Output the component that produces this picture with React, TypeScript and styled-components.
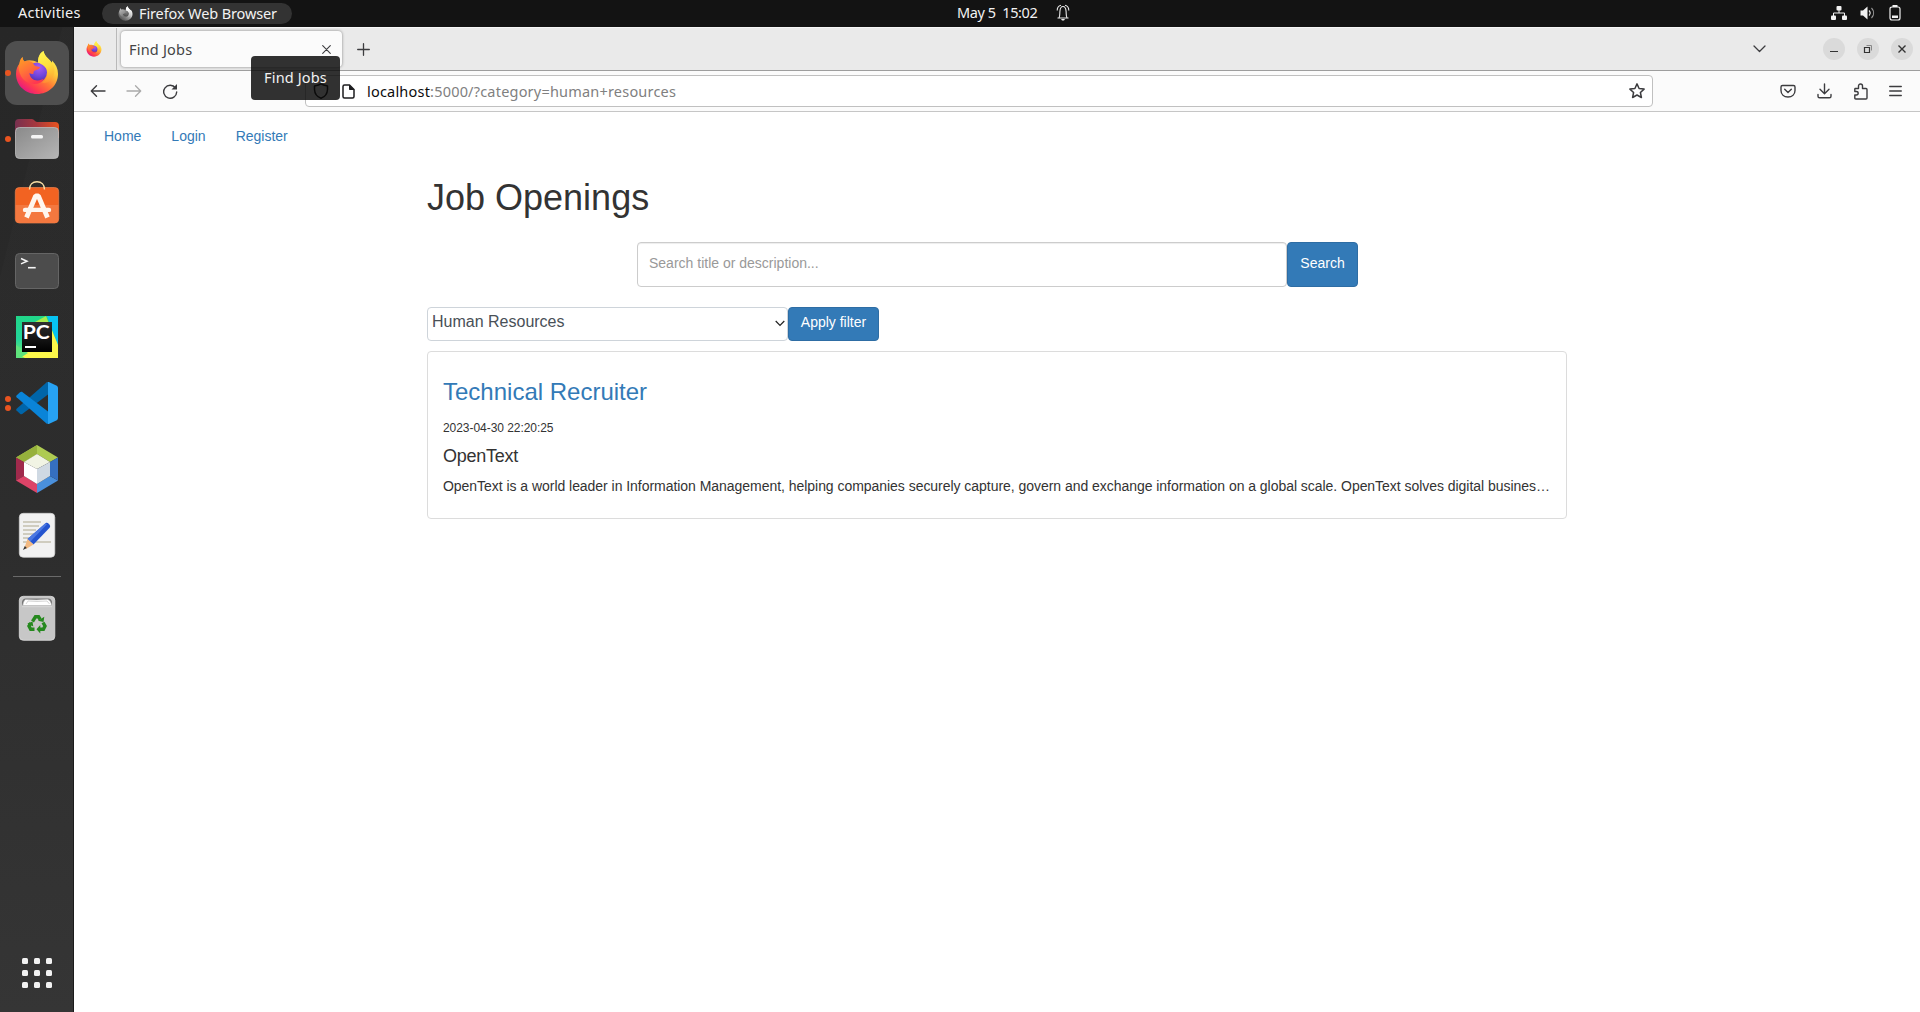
import React from 'react';
import styled, { createGlobalStyle } from 'styled-components';

const ui = '"Noto Sans", "Open Sans", sans-serif';
const helvetica = '"Helvetica Neue", "Liberation Sans", Arial, sans-serif';

const GlobalStyle = createGlobalStyle`
  *, *::before, *::after { box-sizing: border-box; }
  html, body { margin: 0; background: #fff; }
  body { width: 1920px; height: 1012px; overflow: hidden; font-family: ${helvetica}; }
  svg { display: block; flex: none; }
`;

const Desktop = styled.div`
  display: grid;
  grid-template-rows: 27px 985px;
  width: 1920px;
  height: 1012px;
`;

const TopBar = styled.header`
  display: grid;
  grid-template-columns: 937px 1fr auto;
  background: #131313;
  color: #f2f2f2;
  font: 14.5px/25px ${ui};
`;

const TopLeft = styled.div`
  display: flex;
  align-items: center;
  padding-left: 18px;
`;

const Activities = styled.span`
  width: 84px;
  padding-bottom: 2px;
  letter-spacing: 0.22px;
  white-space: nowrap;
`;

const AppPill = styled.div`
  display: flex;
  align-items: center;
  gap: 6px;
  width: 190px;
  height: 21px;
  padding-left: 16px;
  border-radius: 11px;
  background: #333;
  line-height: 21px;
  letter-spacing: -0.12px;
  white-space: nowrap;
`;

const Clock = styled.div`
  display: flex;
  align-items: center;
  gap: 19px;
  padding: 0 0 2px 20px;
  letter-spacing: -0.42px;
  white-space: pre;
`;

const Tray = styled.div`
  display: flex;
  align-items: center;
  gap: 13px;
  padding: 0 19px 1px 0;
`;

const Workspace = styled.div`
  display: grid;
  grid-template-columns: 74px 1846px;
`;

const Dock = styled.nav`
  display: flex;
  flex-direction: column;
  padding-top: 13px;
  border-right: 1px solid #1b1b1b;
  background: linear-gradient(104deg, transparent 0 60px, rgba(255, 255, 255, 0.012) 61px),
    linear-gradient(180deg, #272727, #2b2b2b 50%, #333 100%);
`;

const DockItem = styled.div`
  display: grid;
  grid-template-columns: 5px 64px;
  align-items: center;
  height: 66px;
  position: relative;
`;

const DockTile = styled.div<{ $active?: boolean }>`
  grid-column: 2;
  width: 64px;
  height: 64px;
  border-radius: 12px;
  background: ${(p) => (p.$active ? '#4f4f4f' : 'transparent')};
`;

const RunDots = styled.div`
  position: absolute;
  left: 5px;
  top: 0;
  bottom: 0;
  display: flex;
  flex-direction: column;
  justify-content: center;
  gap: 3px;
`;

const RunDot = styled.i`
  width: 6px;
  height: 6px;
  border-radius: 50%;
  background: #e95420;
`;

const DockRule = styled.div`
  height: 1px;
  margin: 8px 12px 8px 13px;
  background: #6a6a6a;
`;

const AppsButton = styled.div`
  display: grid;
  grid-template-columns: repeat(3, 6px);
  grid-auto-rows: 6px;
  gap: 6px;
  margin: auto 0 24px 22px;
`;

const AppDot = styled.i`
  border-radius: 1.5px;
  background: #f2f2f2;
`;

const Browser = styled.div`
  display: grid;
  grid-template-rows: 44px 41px 900px;
  background: #fff;
`;

const TabStrip = styled.div`
  display: flex;
  align-items: center;
  border-top: 1px solid #f7f7f7;
  border-bottom: 1px solid #9e9e9e;
  background: #eaeaea;
`;

const PinnedTab = styled.div`
  display: flex;
  align-items: center;
  align-self: stretch;
  width: 43px;
  padding-left: 12px;
  border-right: 1px solid #b9b9b9;
`;

const ActiveTab = styled.div`
  display: flex;
  align-items: center;
  justify-content: space-between;
  width: 221px;
  height: 36px;
  margin: 0 15px 0 4px;
  padding: 0 11px 0 8px;
  border-radius: 4px;
  background: #fbfbfb;
  box-shadow: 0 0 3px rgba(0, 0, 0, 0.45);
  color: #444;
  font: 14.5px/36px ${ui};
  letter-spacing: 0.2px;
`;

const WindowControls = styled.div`
  display: flex;
  align-items: center;
  gap: 12px;
  margin-left: auto;
  padding-right: 7px;
`;

const TabListSlot = styled.div`
  margin-right: 45px;
`;

const WindowButton = styled.button`
  display: grid;
  place-items: center;
  width: 22px;
  height: 22px;
  padding: 0;
  border: 0;
  border-radius: 50%;
  background: #dadada;
`;

const Toolbar = styled.div`
  display: flex;
  align-items: center;
  border-bottom: 1px solid #c6c6c6;
  background: #fbfbfb;
`;

const HistoryButtons = styled.div`
  display: flex;
  align-items: center;
  gap: 20px;
  width: 231px;
  padding-left: 16px;
`;

const UrlBar = styled.div`
  display: flex;
  align-items: center;
  width: 1348px;
  height: 32px;
  padding: 0 7px 0 7px;
  border: 1px solid #c0c0c0;
  border-radius: 4px;
  background: #fff;
`;

const PageGlyph = styled.div`
  margin: 0 12px 0 13px;
`;

const UrlText = styled.div`
  flex: 1;
  color: #808080;
  font: 14.5px/30px ${ui};
  letter-spacing: 0.2px;
`;

const UrlHost = styled.span`
  color: #0c0c0d;
`;

const ToolbarActions = styled.div`
  display: flex;
  align-items: center;
  justify-content: space-between;
  width: 122px;
  margin-left: 127px;
`;

const Tooltip = styled.div`
  position: absolute;
  z-index: 5;
  left: 251px;
  top: 56px;
  width: 89px;
  height: 44px;
  border-radius: 4px;
  background: rgba(10, 10, 10, 0.84);
  color: #f2f2f2;
  text-align: center;
  font: 14.5px/43px ${ui};
  letter-spacing: 0.15px;
`;

const Page = styled.div`
  color: #333;
  font-size: 14px;
`;

const SiteNav = styled.nav`
  display: flex;
  gap: 30px;
  height: 48px;
  padding-left: 30px;
  line-height: 48px;
`;

const Link = styled.a`
  color: #337ab7;
  text-decoration: none;
`;

const Container = styled.main`
  display: flex;
  flex-direction: column;
  width: 1140px;
  margin-left: 353px;
`;

const PageTitle = styled.h1`
  margin: 18px 0 24px;
  font-size: 36px;
  font-weight: 400;
  line-height: 40px;
`;

const SearchRow = styled.form`
  display: flex;
  height: 45px;
  margin: 0 0 20px 210px;
`;

const SearchInput = styled.input`
  width: 650px;
  padding: 0 12px 4px 11px;
  border: 1px solid #ccc;
  border-radius: 4px;
  box-shadow: inset 0 1px 1px rgba(0, 0, 0, 0.075);
  font: 14px/20px ${helvetica};
  &::placeholder { color: #999; opacity: 1; }
`;

const Button = styled.button<{ $width: number }>`
  width: ${(p) => p.$width}px;
  padding: 0 0 4px;
  border: 1px solid #2e6da4;
  border-radius: 4px;
  background: #337ab7;
  color: #fff;
  font: 14px/20px ${helvetica};
`;

const FilterRow = styled.div`
  display: flex;
  height: 34px;
  margin-bottom: 10px;
`;

const Select = styled.div`
  display: flex;
  align-items: center;
  justify-content: space-between;
  width: 361px;
  padding: 0 2px 4px 4px;
  border: 1px solid #ced4da;
  border-radius: 4px;
  color: #495057;
  font-size: 16px;
`;

const SelectArrow = styled.svg`
  margin-top: 3px;
`;

const JobCard = styled.article`
  height: 168px;
  padding: 27px 15px 0;
  border: 1px solid #dcdcdc;
  border-radius: 4px;
`;

const JobTitle = styled.h3`
  margin: 0 0 13px;
  font-size: 24px;
  font-weight: 400;
  line-height: 26px;
`;

const JobDate = styled.p`
  margin: 0 0 8px;
  font-size: 12px;
  line-height: 20px;
  letter-spacing: -0.05px;
`;

const Company = styled.h4`
  margin: 0 0 10px;
  font-size: 18px;
  font-weight: 400;
  line-height: 20px;
  letter-spacing: -0.25px;
`;

const Description = styled.p`
  margin: 0;
  line-height: 20px;
  letter-spacing: -0.039px;
  white-space: nowrap;
`;

function FirefoxIcon({ size = 64, crop = '0 0 64 64', mono = false, id = 'ff' }) {
  return (
    <svg width={size} height={size} viewBox={crop} style={mono ? { filter: 'grayscale(1) brightness(1.1)' } : undefined}>
      <defs>
        <linearGradient id={`${id}a`} x1="0.85" y1="0.1" x2="0.2" y2="0.95">
          <stop offset="0" stopColor="#fff44f" />
          <stop offset="0.3" stopColor="#ffc63a" />
          <stop offset="0.55" stopColor="#ff7a35" />
          <stop offset="0.8" stopColor="#ff3b50" />
          <stop offset="1" stopColor="#e31587" />
        </linearGradient>
        <radialGradient id={`${id}b`} cx="0.6" cy="0.25" r="0.8">
          <stop offset="0" stopColor="#a95bf5" />
          <stop offset="0.6" stopColor="#6b43d8" />
          <stop offset="1" stopColor="#4a2a9c" />
        </radialGradient>
        <linearGradient id={`${id}c`} x1="0" y1="0" x2="0.6" y2="1">
          <stop offset="0" stopColor="#ffa320" />
          <stop offset="0.5" stopColor="#ff7139" />
          <stop offset="1" stopColor="#ff3750" />
        </linearGradient>
        <linearGradient id={`${id}d`} x1="0.4" y1="0" x2="0.7" y2="1">
          <stop offset="0" stopColor="#fff44f" />
          <stop offset="0.5" stopColor="#ffdd3d" />
          <stop offset="1" stopColor="#ff9b2e" stopOpacity="0.3" />
        </linearGradient>
      </defs>
      <path fill={`url(#${id}a)`} d="M17.5 16c.2 2 .9 3.700 2 4.500C23 18.500 28 19 33 21.500c.2-5.500 1.500-9 5.500-11.500.6 4 3.500 6.500 6.500 9.500l1.600 2.600c.4-.8.5-1.700.4-2.600C51 23 53 28 53 33c0 11.500-9.500 20-21 20S11 44.500 11 33c0-5 1.700-8 3.500-10.500.2-2.500 1.300-4.800 3-6.500z" />
      <circle cx="32" cy="31.500" r="10" fill={`url(#${id}b)`} />
      <path fill={`url(#${id}d)`} d="M38.500 10c.6 4 3.500 6.500 6.500 9.500 5 5.500 6 12 2 18-3 4.500-7 5-10 4 4-2.500 6-6 5.500-10.500-.5-5-5-7.500-9.500-9.500.2-5.500 1.500-9 5.500-11.500z" />
      <path fill={`url(#${id}c)`} d="M17.500 16c.2 2 .9 3.700 2 4.500 3-1 5.800-.5 8.500 1.500 1 3 3.500 3.500 7 4-.5 2.300-3 2.600-5.500 3.700-1.500.8-.5 2-1.300 3.400-1.500 0-2.700-.5-3.700-1.200 0 4 3.500 7.500 8 7.500 3 0 4.500-1 6.500-1.700-2 4-6 5.700-10 5.300C20 42.500 14 36 13.500 25c.3-.8.600-1.700 1-2.500.2-2.500 1.300-4.800 3-6.500z" />
    </svg>
  );
}

const FilesIcon = () => (
  <svg width="64" height="64" viewBox="0 0 64 64">
    <defs>
      <linearGradient id="flBack" x1="0" y1="0" x2="1" y2="0"><stop stopColor="#77304f" /><stop offset="0.5" stopColor="#a9383d" /><stop offset="1" stopColor="#e9541f" /></linearGradient>
      <linearGradient id="flFront" x1="0" y1="0" x2="1" y2="1"><stop stopColor="#8a8a8a" /><stop offset="1" stopColor="#b5b5b5" /></linearGradient>
    </defs>
    <path fill="url(#flBack)" d="M10 16a4 4 0 0 1 4-4h13c2 0 3 3 5 3h18a4 4 0 0 1 4 4v12H10z" />
    <rect x="10.500" y="20.500" width="43" height="31" rx="4" fill="url(#flFront)" stroke="#bcbcbc" strokeWidth=".8" />
    <rect x="26" y="28" width="12" height="3.500" rx="1.500" fill="#f4f4f4" />
  </svg>
);

const SoftwareIcon = () => (
  <svg width="64" height="64" viewBox="0 0 64 64">
    <rect x="10.300" y="14.500" width="43.400" height="35.500" rx="4" fill="#f26322" stroke="#e9814f" strokeWidth=".7" />
    <path fill="#f4783f" d="M10.600 32h42.800v14a4 4 0 0 1-4 4H14.600a4 4 0 0 1-4-4z" />
    <path d="M24.500 16.500c0-5 3.200-7.700 7.500-7.700s7.500 2.700 7.500 7.700" fill="none" stroke="#fbe0a6" strokeWidth="1.400" />
    <g stroke="#fff6ef" fill="none">
      <path strokeWidth="4.800" strokeLinejoin="bevel" d="M21.500 44.500L30.600 23h2.800l9.100 21.500" />
      <path strokeWidth="4.400" strokeLinecap="round" d="M20 36.900h24" />
    </g>
  </svg>
);

const TerminalIcon = () => (
  <svg width="64" height="64" viewBox="0 0 64 64">
    <rect x="10.500" y="14.500" width="43" height="35" rx="4" fill="#4c4c4c" stroke="#656565" />
    <path d="M16 19.500l6 2.700-6 2.700" fill="none" stroke="#f5f5f5" strokeWidth="1.500" />
    <path d="M23 28.700h7.700" stroke="#f5f5f5" strokeWidth="1.600" />
  </svg>
);

const PyLetters = styled.text`
  font: 700 18.5px Lato, sans-serif;
  fill: #fff;
`;

const PyCharmIcon = () => (
  <svg width="64" height="64" viewBox="0 0 64 64">
    <defs>
      <linearGradient id="pyGreen" x1="0" y1="0" x2="0" y2="1"><stop stopColor="#21d789" /><stop offset=".55" stopColor="#23d49a" /><stop offset="1" stopColor="#7aea6b" /></linearGradient>
      <linearGradient id="pyBox" x1="0" y1="0" x2="0" y2="1"><stop stopColor="#2f2f2f" /><stop offset="1" stopColor="#000" /></linearGradient>
    </defs>
    <path fill="url(#pyGreen)" d="M11 11h42v42H11z" />
    <path fill="#07c3f2" d="M42 11h11v29z" />
    <path fill="#a8ec4e" d="M30 17l11-6 4 10-12 12z" />
    <path fill="#fcf84a" d="M44 18l9 22v13H20l-5-3 26-24z" />
    <path fill="#5fe37c" d="M11 40l12 8-8 5h-4z" />
    <path fill="url(#pyBox)" d="M17 17h30v30H17z" />
    <PyLetters x="17.800" y="34" textLength="27" lengthAdjust="spacingAndGlyphs">PC</PyLetters>
    <path fill="#fff" d="M20 41h11v2H20z" />
  </svg>
);

const CodeIcon = () => (
  <svg width="64" height="64" viewBox="0 0 64 64">
    <path fill="#0065a9" d="M11.500 39.500L15 42.700c.8.700 1.800.7 2.600.1L43 23.500V13c0-1.500-.7-2-1.500-1.500L11.600 37.800c-.5.500-.5 1.200-.1 1.700z" />
    <path fill="#0a84d8" d="M11.500 24.500L15 21.300c.8-.7 1.800-.7 2.600-.1L43 40.500V51c0 1.500-.7 2-1.500 1.500L11.600 26.200c-.5-.5-.5-1.200-.1-1.700z" />
    <path fill="#27a2f3" d="M44.300 11.200l7.500 3.600A2.500 2.500 0 0 1 53 17v30a2.500 2.500 0 0 1-1.200 2.200l-7.500 3.600c-1 .5-2 .3-2.800-.5.900.9 1.500.3 1.500-1.300V13c0-1.600-.6-2.200-1.500-1.300.8-.8 1.800-1 2.800-.5z" />
  </svg>
);

const NetBeansIcon = () => (
  <svg width="64" height="64" viewBox="0 0 64 64">
    <path fill="#aecb52" d="M32 8l21 12.500-8 4.500-13-8-13 8-8-4.500z" />
    <path fill="#96b13c" d="M32 8v9l-13 8-8-4.500z" />
    <path fill="#a02a4c" d="M11 20.500l8 4.500v14l-8 4.500z" />
    <path fill="#dd4468" d="M11 43.500l8-4.500 13 8v9z" />
    <path fill="#4a90dc" d="M32 56v-9l13-8 8 4.500z" />
    <path fill="#356fc0" d="M53 20.500V43.500L45 39V25z" />
    <path fill="#f1f4e4" d="M32 17l13 8-13 7-13-7z" />
    <path fill="#fff" d="M19 25l13 7v15l-13-8z" />
    <path fill="#cfd9e3" d="M45 25l-13 7v15l13-8z" />
  </svg>
);

const EditorIcon = () => (
  <svg width="64" height="64" viewBox="0 0 64 64">
    <rect x="14.300" y="10.300" width="35.500" height="44" rx="4" fill="#f1f1f1" stroke="#d6d6d6" strokeWidth=".7" />
    <path stroke="#cfccbf" strokeWidth="2" d="M18 19h18M18 23h16M18 27h13M18 31h11M18 35h9M18 39h28" />
    <path fill="#2454cf" d="M40.500 20.300c1-.8 2.200-.5 3.500.8s1.500 2.600.6 3.600L28.500 41.500l-6-5.500z" />
    <path fill="#4b78e2" d="M40.500 20.300l1.500 1L25 39l-2.500-3z" />
    <path fill="#f2b982" d="M22.500 36l6 5.500-7.500 4.500-1.500-1.500z" />
    <path fill="#333" d="M19.800 43l2 2-3.800 2z" />
  </svg>
);

const TrashIcon = () => (
  <svg width="64" height="64" viewBox="0 0 64 64">
    <rect x="14.300" y="10.300" width="35.500" height="44" rx="4" fill="#c7c7c7" stroke="#dedede" strokeWidth=".8" />
    <path fill="#777" d="M17.500 19.500c-1.300-3-.3-7 3-7h23c3.300 0 4.300 4 3 7z" />
    <path fill="#fff" stroke="#b5b5b5" strokeWidth=".5" d="M18 19.500c0-2 .6-4.500 2.500-6l11 .4 11-.6c2.500.7 4 3.700 4 6.200z" />
    <path fill="none" stroke="#bbb" strokeWidth=".6" d="M21 18l2-3 9 .5 10-.5 2.500 3" />
    <path fill="#d4d4d4" d="M17 19.800h30v1.500H17z" />
    <g fill="none" stroke="#26891f" strokeWidth="3.400">
      <path d="M27.500 35.500l3-4.800h3l1.700 2.800" />
      <path d="M38 36.500l2 3.500-1.600 3.200h-4" />
      <path d="M29.500 43.300h-3.800L24 40l1.700-2.800" />
    </g>
    <path fill="#26891f" d="M33 34.700l5.500 1.200.8-5.200zM35.300 39v8.500l-3.800-4.300zM22.300 37.500l5.200-2 .8 5z" />
  </svg>
);

const dockItems = [
  { name: 'firefox', icon: <FirefoxIcon />, dots: 1, active: true },
  { name: 'files', icon: <FilesIcon />, dots: 1 },
  { name: 'software', icon: <SoftwareIcon />, dots: 0 },
  { name: 'terminal', icon: <TerminalIcon />, dots: 0 },
  { name: 'pycharm', icon: <PyCharmIcon />, dots: 0 },
  { name: 'code', icon: <CodeIcon />, dots: 2 },
  { name: 'netbeans', icon: <NetBeansIcon />, dots: 0 },
  { name: 'editor', icon: <EditorIcon />, dots: 0 },
];

const line = { fill: 'none', stroke: '#3c3c3f', strokeWidth: 1.3, strokeLinecap: 'round', strokeLinejoin: 'round' } as const;

const BellIcon = () => (
  <svg width="14" height="17" viewBox="0 0 14 17" fill="none" stroke="#e8e8e8" strokeWidth="1.100">
    <path d="M3 14c1-2 .7-4 .9-6.500C4.100 4.500 5 2.500 7 2.500s2.900 2 3.100 5C10.300 10 10 12 11 14M1.500 14h11" />
    <path d="M1.200 6.500C1.200 4 2.500 1.700 5 1.200M12.800 6.500C12.800 4 11.500 1.700 9 1.200" />
    <path d="M5 15h4l-1 1.500H6z" fill="#e8e8e8" stroke="none" />
  </svg>
);

const NetworkIcon = () => (
  <svg width="16" height="14" viewBox="0 0 16 14" fill="#f2f2f2">
    <rect x="5.500" width="5" height="4.500" rx="1" /><rect y="9.500" width="5" height="4.500" rx="1" /><rect x="11" y="9.500" width="5" height="4.500" rx="1" />
    <path d="M8 4v3M2.500 10V7h11v3" fill="none" stroke="#f2f2f2" strokeWidth="1" />
  </svg>
);

const VolumeIcon = () => (
  <svg width="16" height="14" viewBox="0 0 16 14">
    <path fill="#f2f2f2" d="M.500 4.500H3L7.500.5v13L3 9.500H.500z" />
    <path fill="none" stroke="#f2f2f2" strokeWidth="1.100" d="M9 4.500c1.400 1.500 1.400 3.500 0 5" />
    <path fill="none" stroke="#999" strokeWidth="1.100" d="M11.500 2c2.800 3 2.800 7 0 10" />
  </svg>
);

const BatteryIcon = () => (
  <svg width="12" height="16" viewBox="0 0 12 16">
    <path fill="none" stroke="#f2f2f2" strokeWidth="1.200" d="M3 2h6c1.300 0 2 .7 2 2v9c0 1.300-.7 2-2 2H3c-1.300 0-2-.7-2-2V4c0-1.300.7-2 2-2z" />
    <path fill="#f2f2f2" d="M3.500 0h5v2h-5zM3 10.500h6V13H3z" />
  </svg>
);

export default function App() {
  return (
    <Desktop>
      <GlobalStyle />
      <TopBar>
        <TopLeft>
          <Activities>Activities</Activities>
          <AppPill>
            <FirefoxIcon size={15} crop="10 9 44 45" mono id="fm" />
            Firefox Web Browser
          </AppPill>
        </TopLeft>
        <Clock>{'May 5  15:02'}<BellIcon /></Clock>
        <Tray><NetworkIcon /><VolumeIcon /><BatteryIcon /></Tray>
      </TopBar>

      <Workspace>
        <Dock>
          {dockItems.map((item) => (
            <DockItem key={item.name}>
              <DockTile $active={item.active}>{item.icon}</DockTile>
              <RunDots>{Array.from({ length: item.dots }, (_, i) => <RunDot key={i} />)}</RunDots>
            </DockItem>
          ))}
          <DockRule />
          <DockItem><DockTile><TrashIcon /></DockTile></DockItem>
          <AppsButton>{Array.from({ length: 9 }, (_, i) => <AppDot key={i} />)}</AppsButton>
        </Dock>

        <Browser>
          <TabStrip>
            <PinnedTab><FirefoxIcon size={16} crop="10 9 44 45" id="fp" /></PinnedTab>
            <ActiveTab>
              Find Jobs
              <svg width="9" height="9" viewBox="0 0 9 9"><path {...line} strokeWidth="1.100" d="M.7.700l7.600 7.600M8.300.700L.7 8.300" /></svg>
            </ActiveTab>
            <svg width="13" height="13" viewBox="0 0 13 13"><path {...line} d="M6.500.7v11.600M.7 6.500h11.600" /></svg>
            <WindowControls>
              <TabListSlot>
                <svg width="13" height="8" viewBox="0 0 13 8"><path {...line} d="M1 1l5.500 5.500L12 1" /></svg>
              </TabListSlot>
              <WindowButton><svg width="10" height="10" viewBox="0 0 10 10"><path d="M1 7.500h8" stroke="#333" /></svg></WindowButton>
              <WindowButton>
                <svg width="10" height="10" viewBox="0 0 10 10" fill="none"><path d="M1.500 3.500h5v5h-5z" stroke="#333" strokeWidth="1.200" /><path d="M3.500 1.500h5v5" stroke="#888" /></svg>
              </WindowButton>
              <WindowButton><svg width="10" height="10" viewBox="0 0 10 10"><path d="M1.500 1.500l7 7M8.500 1.500l-7 7" stroke="#333" strokeWidth="1.400" /></svg></WindowButton>
            </WindowControls>
          </TabStrip>

          <Toolbar>
            <HistoryButtons>
              <svg width="16" height="16" viewBox="0 0 16 16"><path {...line} strokeWidth="1.400" d="M15 8H1.500M6.500 2.700L1.300 8l5.200 5.300" /></svg>
              <svg width="16" height="16" viewBox="0 0 16 16"><path {...line} stroke="#aaa" d="M1 8h13.500M9.500 2.700L14.700 8l-5.200 5.300" /></svg>
              <svg width="16" height="16" viewBox="0 0 16 16"><path {...line} strokeWidth="1.400" d="M13.500 5A6.500 6.500 0 1 0 14.700 9" /><path fill="#3c3c3f" d="M15 1v5.500H9.500z" /></svg>
            </HistoryButtons>
            <UrlBar>
              <svg width="16" height="16" viewBox="0 0 16 16"><path {...line} stroke="#111" strokeWidth="1.500" d="M8 .9C6.500 2 4 2.600 1.500 3v3.500C1.700 11 4.500 14 8 15.200c3.500-1.200 6.300-4.200 6.500-8.700V3C12 2.600 9.500 2 8 .9z" /></svg>
              <PageGlyph>
                <svg width="13" height="15" viewBox="0 0 13 15"><path {...line} stroke="#1c1c1e" strokeWidth="1.500" d="M7.500 1H2.500C1.500 1 1 1.500 1 2.500v10c0 1 .5 1.500 1.500 1.500h8c1 0 1.500-.5 1.500-1.500V5.500z" /><path fill="#1c1c1e" d="M7 .700L12.500 6H8C7.300 6 7 5.700 7 5z" /></svg>
              </PageGlyph>
              <UrlText><UrlHost>localhost</UrlHost>:5000/?category=human+resources</UrlText>
              <svg width="16" height="16" viewBox="0 0 16 16"><path {...line} strokeWidth="1.500" d="M8 .9l2.100 4.600 5 .6-3.700 3.400 1 5L8 12l-4.400 2.500 1-5L.9 6.100l5-.6z" /></svg>
            </UrlBar>
            <ToolbarActions>
              <svg width="16" height="16" viewBox="0 0 16 16"><path {...line} strokeWidth="1.400" d="M2.500 2.500h11c1 0 1.500.6 1.500 1.500v3.500c0 4-3 6.500-7 6.500s-7-2.500-7-6.500V4c0-.9.500-1.500 1.500-1.500zM4.700 6.300L8 9.500l3.300-3.200" /></svg>
              <svg width="15" height="16" viewBox="0 0 15 16"><path {...line} strokeWidth="1.400" d="M7.500 1v9.500M3 6.300l4.500 4.500L12 6.300M1 11.500v1.700c0 1 .6 1.600 1.600 1.600h9.800c1 0 1.600-.6 1.600-1.600v-1.700" /></svg>
              <svg width="15" height="17" viewBox="0 0 15 17"><path {...line} strokeWidth="1.400" d="M2 5.500h3.500V3c0-2.700 4-2.700 4 0v2.500H13c.7 0 1 .3 1 1V15c0 .7-.3 1-1 1H2.800c-.7 0-1-.3-1-1v-3h1.500c2.500 0 2.500-3.500 0-3.500H1.800V6" /></svg>
              <svg width="13" height="12" viewBox="0 0 13 12"><path {...line} d="M.7 1.500h11.600M.7 6h11.600M.7 10.500h11.600" /></svg>
            </ToolbarActions>
          </Toolbar>

          <Page>
            <SiteNav><Link>Home</Link><Link>Login</Link><Link>Register</Link></SiteNav>
            <Container>
              <PageTitle>Job Openings</PageTitle>
              <SearchRow>
                <SearchInput placeholder="Search title or description..." />
                <Button type="button" $width={71}>Search</Button>
              </SearchRow>
              <FilterRow>
                <Select>
                  Human Resources
                  <SelectArrow width="10" height="7" viewBox="0 0 10 7"><path d="M.7 1L5 5.500 9.300 1" fill="none" stroke="#222" strokeWidth="1.200" /></SelectArrow>
                </Select>
                <Button type="button" $width={91}>Apply filter</Button>
              </FilterRow>
              <JobCard>
                <JobTitle><Link>Technical Recruiter</Link></JobTitle>
                <JobDate>2023-04-30 22:20:25</JobDate>
                <Company>OpenText</Company>
                <Description>
                  OpenText is a world leader in Information Management, helping companies securely capture, govern and exchange information on a global scale. OpenText solves digital busines…
                </Description>
              </JobCard>
            </Container>
          </Page>
        </Browser>
      </Workspace>
      <Tooltip>Find Jobs</Tooltip>
    </Desktop>
  );
}
